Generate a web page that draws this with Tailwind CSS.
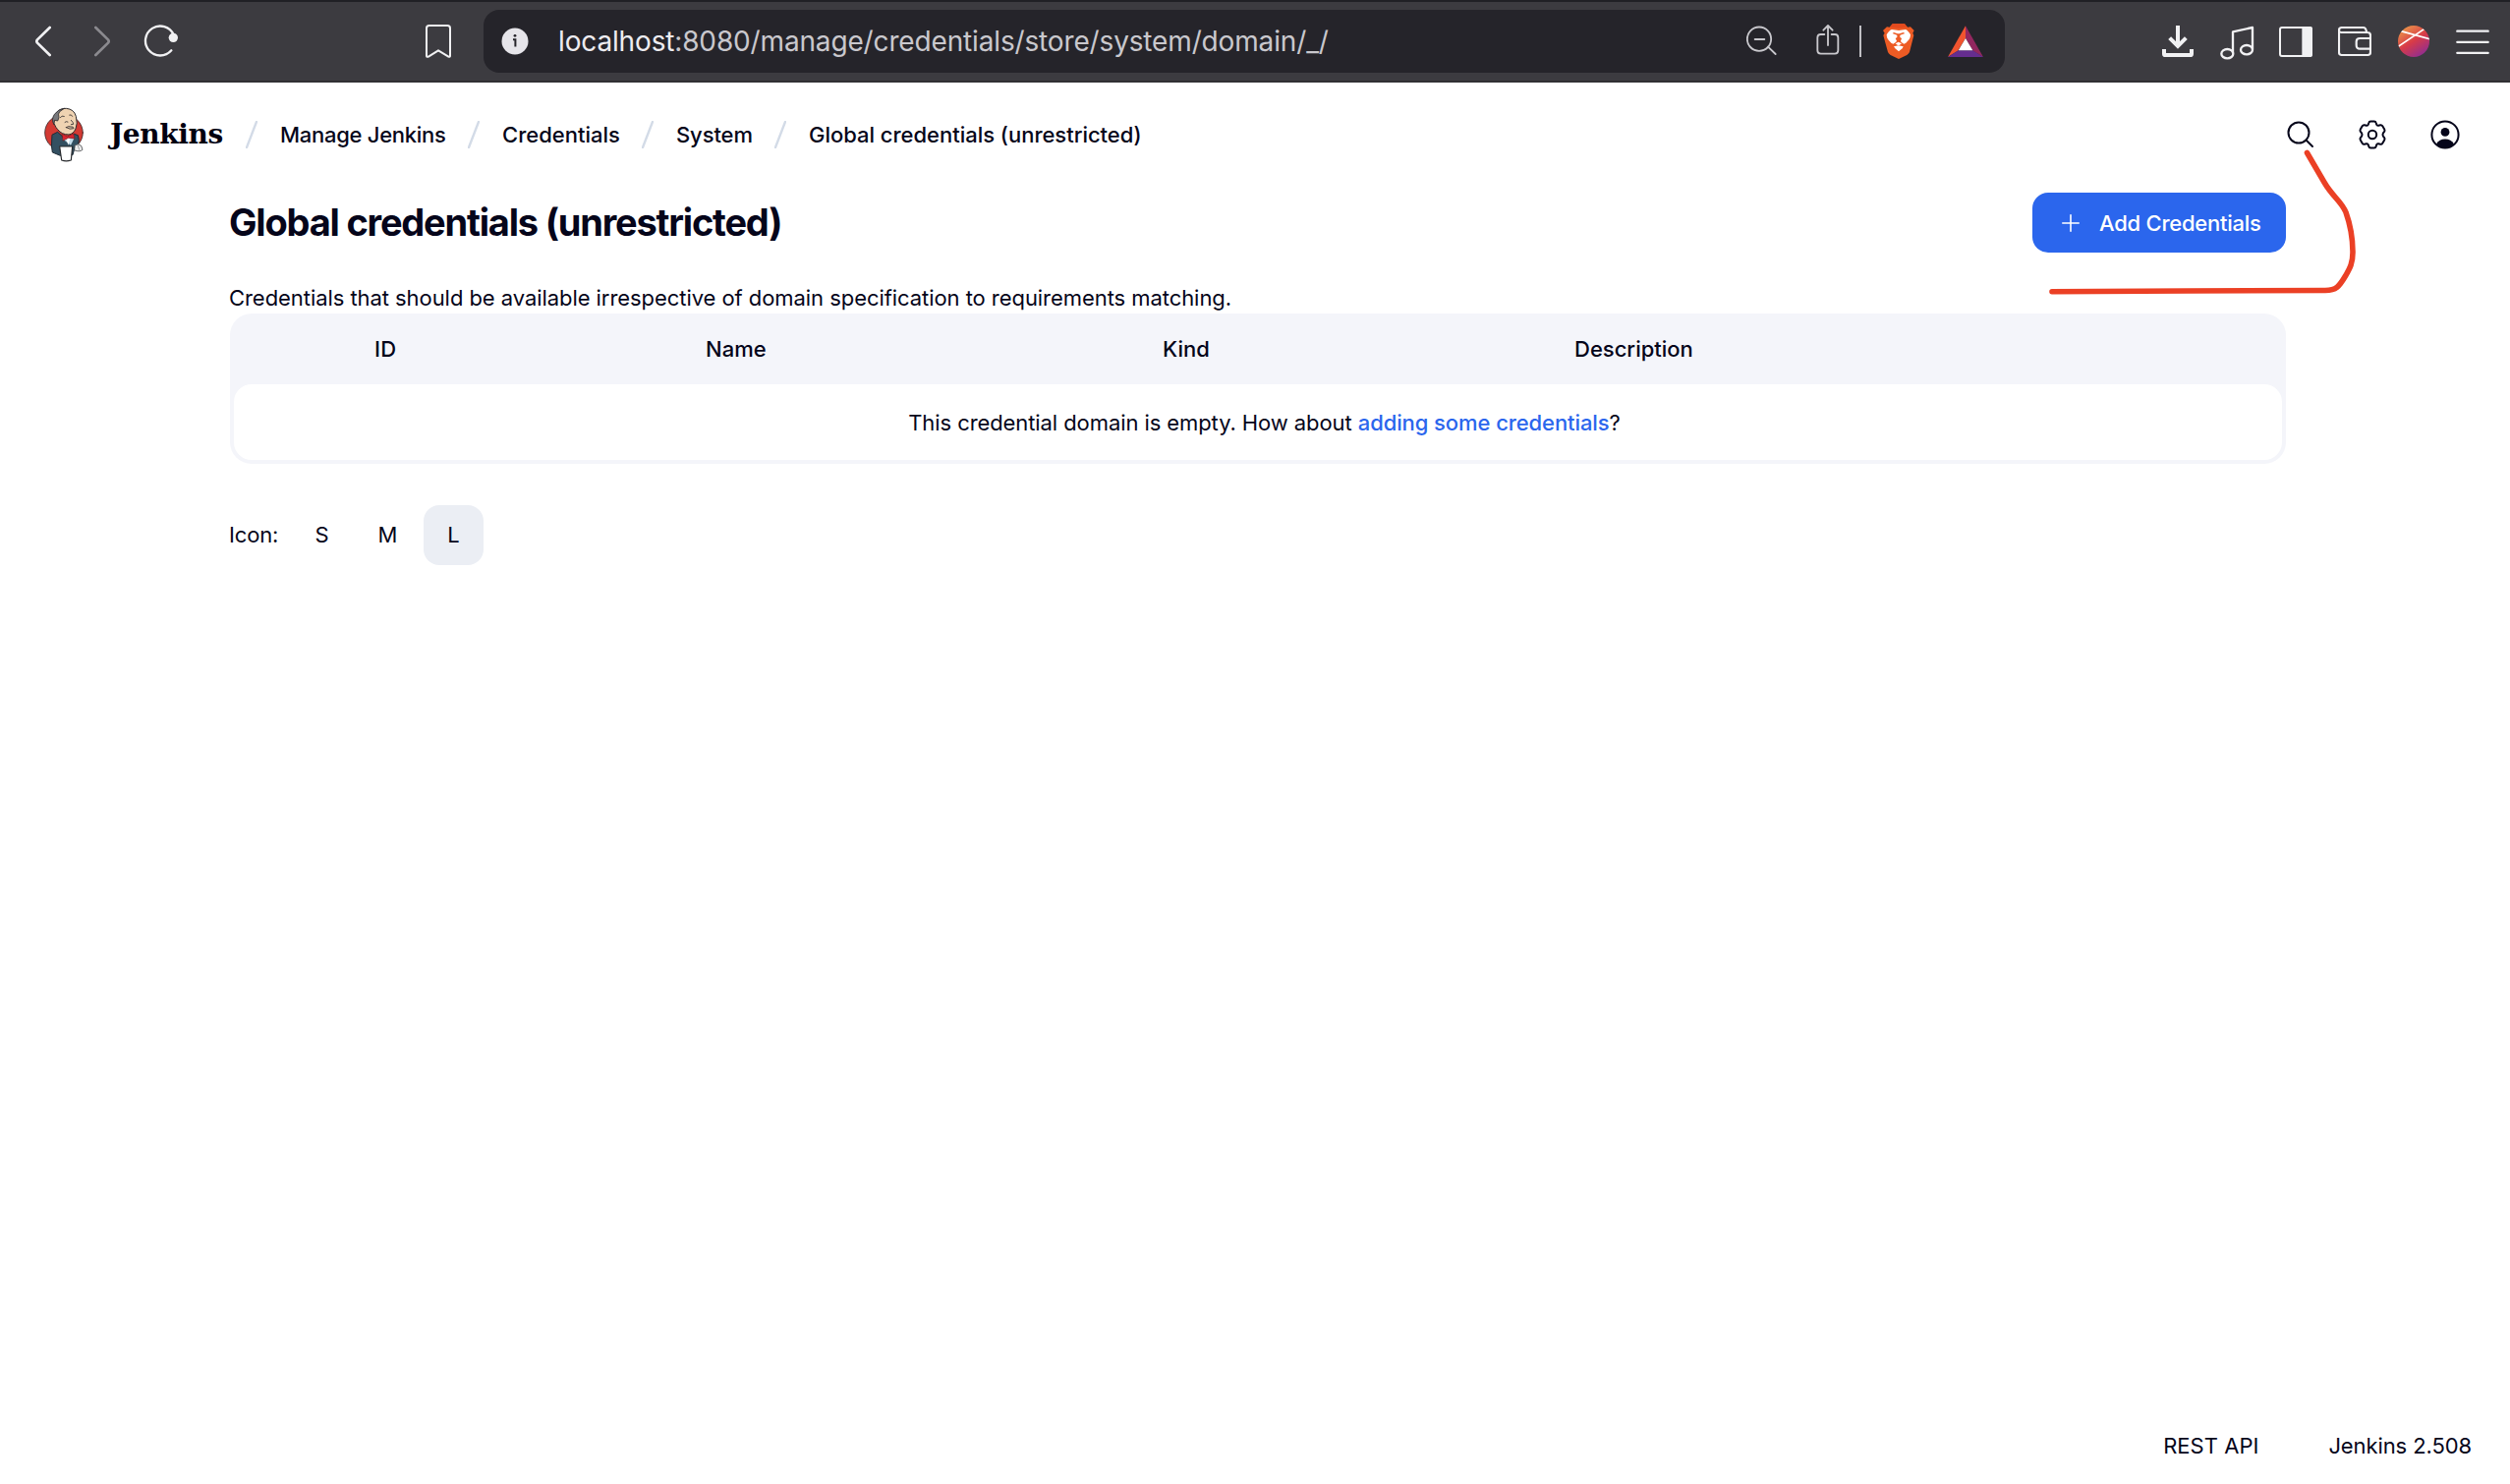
<!DOCTYPE html>
<html lang="en">
<head>
<meta charset="utf-8">
<title>Global credentials (unrestricted) - Jenkins</title>
<script src="https://cdn.jsdelivr.net/npm/@tailwindcss/browser@4"></script>
</head>
<body class="relative flex h-[1510px] w-[2554px] flex-col overflow-hidden bg-white font-['Inter','Liberation_Sans',sans-serif] text-[22px] leading-[30px] text-[#05051a]">

<!-- Browser toolbar -->
<div class="flex h-[84px] shrink-0 items-center border-t-2 border-b-2 border-t-[#202025] border-b-[#313034] bg-[#3c3b40] text-[#f1f1f3]">
  <svg class="ml-[36px] h-9 w-4" viewBox="108 72 48 108" fill="none" stroke="currentColor" stroke-width="8" stroke-linecap="round" stroke-linejoin="round"><path d="M152 84L114 121Q110 126 114 131L152 168"/></svg>
  <svg class="ml-[44px] h-9 w-4 text-[#8b8a8f]" viewBox="288 72 48 108" fill="none" stroke="currentColor" stroke-width="8" stroke-linecap="round" stroke-linejoin="round"><path d="M292 84L330 121Q334 126 330 131L292 168"/></svg>
  <svg class="ml-[34px] h-9 w-9" viewBox="438 72 108 108" fill="none" stroke="currentColor" stroke-width="7" stroke-linecap="round"><path d="M530 106A45 45 0 1 0 523 154"/><circle cx="529" cy="115" r="14" fill="currentColor" stroke="none"/></svg>
  <svg class="ml-[250px] h-9 w-7" viewBox="1296 72 84 108" fill="none" stroke="currentColor" stroke-width="6" stroke-linejoin="round"><path d="M1302 86Q1302 78 1310 78H1366Q1374 78 1374 86V170Q1374 175 1369 173L1338 154L1308 173Q1302 175 1302 170Z"/></svg>

  <div class="ml-8 flex h-16 w-[1548px] items-center rounded-[16px] bg-[#25242a] text-[#c9c8cd]">
    <svg class="ml-[18px] h-7 w-7 text-[#e6e5ea]" viewBox="0 0 28 28"><circle cx="14" cy="14" r="13.5" fill="currentColor"/><circle cx="14" cy="8.3" r="1.4" fill="#25242a"/><path d="M12 12.2H14.4V19.5" fill="none" stroke="#25242a" stroke-width="2"/></svg>
    <div class="ml-[30px] w-[1209px] text-[28px] leading-9 tracking-[-0.15px] whitespace-nowrap"><span class="text-[#edecf0]">localhost</span>:8080/manage/credentials/store/system/domain/_/</div>
    <svg class="h-9 w-8" viewBox="110 72 96 108" fill="none" stroke="currentColor" stroke-width="5.5" stroke-linecap="round"><circle cx="149" cy="119" r="36.5"/><path d="M136 120H165M176 143L199 165"/></svg>
    <svg class="ml-[39px] h-9 w-6" viewBox="324 72 72 108" fill="none" stroke="currentColor" stroke-width="5.5" stroke-linecap="round" stroke-linejoin="round"><path d="M349 105H338Q328 105 328 115V154Q328 164 338 164H381Q391 164 391 154V115Q391 105 381 105H371M360 138V80M346 92L360 78L374 92"/></svg>
    <div class="ml-5 h-8 w-0.5 bg-[#c0bfc4]"></div>
    <svg class="ml-[22px] h-9 w-8" viewBox="18 42 96 108">
      <path fill="#ed5b24" d="M47 43H84L93 53L102 52L113 63L109 71L112 78L99 129Q97 134 91 138L66 150L41 138Q35 134 33 129L19 78L23 71L18 63L30 52L38 53Z"/>
      <path fill="#e34a1e" d="M47 43H84L93 53L66 56L38 53Z"/>
      <path fill="#fff" d="M45 60L66 63L87 60Q94 62 102 76Q102 84 98 90L88 101L82 104L74 99L72 95L75 87L70 84V77L85 72L80 69L68 73H63L51 69L47 72L61 77V84L56 87L60 95L57 99L49 104L43 101L33 90Q29 84 29 76Q37 62 45 60Z"/>
      <path fill="#fff" d="M56 103L65 98L75 103L68 108H63ZM51 112L65 109L80 112L77 118L66 127L55 118Z"/>
    </svg>
    <svg class="ml-[34px] h-8 w-9" viewBox="216 45 108 96"><path fill="#f0542f" d="M270 46V84L246 122L216 141Z"/><path fill="#92275f" d="M270 46V84L293 122L324 141Z"/><path fill="#652d8f" d="M216 141L248 121H292L324 141Z"/><path fill="#fff" d="M270 84L292 121H248Z"/></svg>
  </div>

  <svg class="ml-[160px] h-9 w-8" viewBox="120 72 96 108" fill="none" stroke="currentColor" stroke-width="12"><path d="M168 78V138M143 116L168 141L193 116M126 150V164Q126 168 130 168H206Q210 168 210 164V150"/></svg>
  <svg class="ml-[27px] h-[38px] w-9" viewBox="297 69 108 114" fill="none" stroke="currentColor" stroke-width="7" stroke-linejoin="round"><ellipse cx="319" cy="164" rx="18" ry="14"/><ellipse cx="378" cy="152" rx="18" ry="14"/><path d="M336 162V97L396 84V151"/></svg>
  <svg class="ml-6 h-9 w-[34px]" viewBox="477 72 102 108" fill="none" stroke="currentColor" stroke-width="6"><rect x="480" y="84" width="96" height="87" rx="6"/><path d="M550 84H572Q576 84 576 88V167Q576 171 572 171H550Z" fill="currentColor"/></svg>
  <svg class="ml-[26px] h-9 w-[34px]" viewBox="657 72 102 108" fill="none" stroke="currentColor" stroke-width="6.500" stroke-linejoin="round"><path d="M660 94V160Q660 168 668 168H748Q756 168 756 160V108Q756 99 747 99H667Q660 99 660 92Q660 84 668 84H734Q742 84 744 97M756 117H724Q713 117 713 127V138Q713 149 724 149H756"/></svg>
  <svg class="ml-[27px] h-9 w-8" viewBox="840 72 96 108">
    <defs><linearGradient id="globe" x1="0.15" y1="0" x2="0.8" y2="1"><stop offset="0" stop-color="#eda04a"/><stop offset=".5" stop-color="#d83b48"/><stop offset="1" stop-color="#8a2c98"/></linearGradient><clipPath id="disc"><circle cx="888" cy="126" r="48"/></clipPath></defs>
    <circle cx="888" cy="126" r="48" fill="url(#globe)"/><path clip-path="url(#disc)" d="M838 144L924 86M846 94L940 120" stroke="#fff" stroke-width="5" fill="none"/>
  </svg>
  <svg class="ml-[27px] h-9 w-[34px]" viewBox="1017 72 102 108" fill="none" stroke="currentColor" stroke-width="7" stroke-linecap="round"><path d="M1021 95H1115M1021 128.500H1115M1021 161.500H1115"/></svg>
</div>

<!-- Page header -->
<header class="flex h-[106px] shrink-0 items-center">
  <svg class="ml-[45px] h-14 w-10" viewBox="45 42 120 168" stroke-linejoin="round" stroke-linecap="round">
    <ellipse cx="105" cy="120" rx="58" ry="55" fill="#d33a33" stroke="#3b2a2c" stroke-width="2.500"/>
    <path d="M70 126L86 118L108 138L136 124L148 128Q154 142 148 158L138 166L132 188L94 190L70 180Q66 162 68 142Z" fill="#335061" stroke="#1d2b36" stroke-width="3"/>
    <path d="M100 138L118 134L136 138L126 158Z" fill="#c3dcea"/>
    <path d="M112 136L118 158L124 138Z" fill="#fff"/>
    <path d="M82 60Q92 45 112 46Q136 48 142 70Q148 92 141 108Q134 124 120 126Q98 126 86 110Q80 104 77 96Q68 86 78 78Z" fill="#efd3b2" stroke="#2c2a2c" stroke-width="3"/>
    <path d="M74 94Q66 80 76 64Q88 48 106 46L92 56Q86 62 90 74L86 84L78 82Z" fill="#77787c" stroke="#2c2a2c" stroke-width="2.500"/>
    <path d="M94 74Q98 66 106 70M122 66Q128 63 131 70M108 88Q112 84 117 87M127 82L132 88L134 94L127 95" fill="none" stroke="#2c2a2c" stroke-width="2.500"/>
    <path d="M112 104Q120 98 126 102Q134 100 135 107Q124 112 112 104Z" fill="#cdb9a0" stroke="#3a3030" stroke-width="2.500"/>
    <path d="M100 124L116 132L134 122L138 138L119 136L103 144Z" fill="#d8232f" stroke="#7c1c1f" stroke-width="2"/>
    <path d="M92 162H131L127 204Q112 209 98 204Z" fill="#fff" stroke="#26282b" stroke-width="3.500"/>
    <path d="M139 158Q150 152 158 160L162 172Q154 180 138 174Z" fill="#eee" stroke="#47494c" stroke-width="2.500"/>
    <path d="M148 160L152 172" stroke="#77787c" stroke-width="2"/>
  </svg>
  <div class="ml-[27px] w-[116px] font-['DejaVu_Serif','Liberation_Serif',serif] text-[28px] leading-9 font-bold tracking-[-0.4px] whitespace-nowrap text-[#000010]">Jenkins</div>
  <nav class="ml-[22px] flex items-center gap-[23px] font-[450] whitespace-nowrap">
    <svg class="h-7 w-3 text-[#d3dbe7]" viewBox="0 0 12 28" fill="none" stroke="currentColor" stroke-width="2.400" stroke-linecap="round"><path d="M11 1L1 27"/></svg>
    <a class="w-[168px] tracking-[-0.28px]">Manage Jenkins</a>
    <svg class="h-7 w-3 text-[#d3dbe7]" viewBox="0 0 12 28" fill="none" stroke="currentColor" stroke-width="2.400" stroke-linecap="round"><path d="M11 1L1 27"/></svg>
    <a class="w-[119px]">Credentials</a>
    <svg class="h-7 w-3 text-[#d3dbe7]" viewBox="0 0 12 28" fill="none" stroke="currentColor" stroke-width="2.400" stroke-linecap="round"><path d="M11 1L1 27"/></svg>
    <a class="w-[77px] tracking-[-0.1px]">System</a>
    <svg class="h-7 w-3 text-[#d3dbe7]" viewBox="0 0 12 28" fill="none" stroke="currentColor" stroke-width="2.400" stroke-linecap="round"><path d="M11 1L1 27"/></svg>
    <a class="tracking-[-0.02px]">Global credentials (unrestricted)</a>
  </nav>
  <div class="mr-[51px] ml-auto flex items-center gap-[44px]">
    <svg class="-mr-px h-[30px] w-[30px]" viewBox="0 0 30 30" fill="none" stroke="currentColor" stroke-width="2" stroke-linecap="round"><circle cx="13" cy="13" r="10.500"/><path d="M20.500 20.500L27 27"/></svg>
    <svg class="h-[30px] w-[30px]" viewBox="0 0 30 30" fill="none" stroke="currentColor" stroke-width="2" stroke-linejoin="round"><path d="M13.200 1.500H16.800Q18.300 1.500 18.700 3L19.200 4.600Q19.700 6 21.200 5.700L23 5.300Q24.500 5 25.300 6.300L27.200 9.500Q28 10.900 27 12.100L25.900 13.400Q25 15 25.900 16.600L27 17.900Q28 19.100 27.200 20.500L25.300 23.700Q24.500 25 23 24.700L21.200 24.300Q19.700 24 19.200 25.400L18.700 27Q18.300 28.500 16.800 28.500H13.200Q11.700 28.500 11.300 27L10.800 25.400Q10.300 24 8.800 24.300L7 24.700Q5.500 25 4.700 23.700L2.800 20.500Q2 19.100 3 17.900L4.100 16.600Q5 15 4.100 13.400L3 12.100Q2 10.900 2.800 9.500L4.700 6.300Q5.500 5 7 5.300L8.800 5.700Q10.300 6 10.800 4.600L11.300 3Q11.700 1.500 13.200 1.500Z"/><circle cx="15" cy="15" r="4.200"/></svg>
    <svg class="h-[30px] w-[30px]" viewBox="0 0 30 30"><circle cx="15" cy="15" r="13.600" fill="none" stroke="currentColor" stroke-width="2"/><circle cx="15" cy="12.400" r="4.400" fill="currentColor"/><path d="M6 24.500Q9 19.500 15 19.500T24 24.500Q20 28.800 15 28.800T6 24.500Z" fill="currentColor"/></svg>
  </div>
</header>

<!-- Page content -->
<main class="ml-[234px] flex w-[2092px] grow flex-col">
  <div class="mt-1.5 flex h-[61px] items-center justify-between">
    <h1 class="-ml-px pb-0.5 text-[38px] leading-[48px] font-[650] tracking-[-1.2px]">Global credentials (unrestricted)</h1>
    <button class="flex h-[61px] w-[258px] items-center rounded-[16px] bg-[#2b66ed] pl-[30px] font-[450] whitespace-nowrap text-white">
      <svg class="h-[18px] w-[18px]" viewBox="0 0 18 18" fill="none" stroke="currentColor" stroke-width="1.600" stroke-linecap="round"><path d="M9 .8V17.200M.8 9H17.200"/></svg>
      <span class="ml-5 tracking-[-0.25px]">Add Credentials</span>
    </button>
  </div>
  <p class="-ml-px mt-[31px] tracking-[-0.06px] whitespace-nowrap">Credentials that should be available irrespective of domain specification to requirements matching.</p>

  <section class="mt-px h-[153px] rounded-[22px] bg-[#f4f5fa] px-1 pb-1">
    <div class="grid h-[72px] grid-cols-[337px_465px_419px_1fr] items-center pl-[143px] font-[450]">
      <div class="tracking-[0.3px]">ID</div><div>Name</div><div>Kind</div><div>Description</div>
    </div>
    <div class="flex h-[77px] items-center justify-center rounded-[18px] bg-white pl-[13px] tracking-[-0.085px]"><span>This credential domain is empty. How about <a class="font-[450] text-[#2b66ed]">adding some credentials</a>?</span></div>
  </section>

  <div class="mt-[42px] flex h-[61px] items-center">
    <span class="-ml-px w-[64px] pb-0.5 tracking-[-0.16px]">Icon:</span>
    <div class="flex gap-[6px]">
      <a class="flex h-[61px] w-[61px] items-center justify-center pb-0.5">S</a>
      <a class="flex h-[61px] w-[61px] items-center justify-center pb-0.5">M</a>
      <a class="flex h-[61px] w-[61px] items-center justify-center rounded-[16px] bg-[#ebeef4] pb-0.5">L</a>
    </div>
  </div>
</main>

<footer class="flex h-[78px] shrink-0 items-center justify-end gap-[71px] pr-[39px]">
  <a class="tracking-[0.03px]">REST API</a><a class="tracking-[-0.1px]">Jenkins 2.508</a>
</footer>

<!-- Freehand marker stroke over the page -->
<svg class="pointer-events-none absolute top-[150px] left-[2080px] h-[152px] w-[322px]" viewBox="2080 150 322 152" fill="none" stroke="#eb4025" stroke-width="5.600" stroke-linecap="round" stroke-linejoin="round"><path d="M2347.500 155.500L2365 185.500C2374 201 2382 204 2387 216C2392 230 2394 243 2394 257C2394 268 2391 273 2387 280C2380 292 2377 295.300 2366 295.500C2320 296.300 2140 295.800 2088 296.700"/></svg>
</body>
</html>
